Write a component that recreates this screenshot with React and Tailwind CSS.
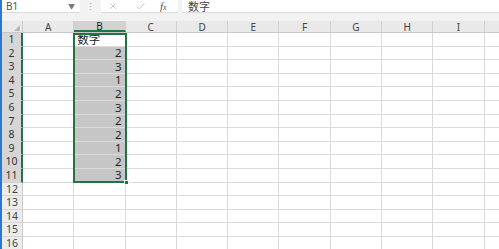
import React from "react";
import { X, Check } from "lucide-react";

const cols = ["A", "B", "C", "D", "E", "F", "G", "H", "I", ""];
const values = [2, 3, 1, 2, 3, 2, 2, 1, 2, 3];

// Spreadsheet grid with column B selected (B1:B11)
const App = () => {
  const rows = Array.from({ length: 16 }, (_, i) => i + 1);

  return (
    <div
      className="w-[499px] h-[249px] overflow-hidden flex bg-white text-[#222]"
      style={{ fontFamily: '"Noto Sans", "Noto Sans CJK SC", sans-serif' }}
    >
      {/* left blue strip */}
      <div className="w-[2px] shrink-0 bg-[#2b78d0]" />

      <div className="flex-1 flex flex-col min-w-0">
        {/* formula bar */}
        <div className="h-[21px] shrink-0 bg-[#f2f2f2] flex items-start">
          <div className="w-[78px] h-[13px] bg-white border-b border-[#dcdcdc] flex items-center justify-between pl-[4px] pr-[5px]">
            <span className="text-[10px] leading-none text-[#555]">B1</span>
            <span className="text-[7px] leading-none text-[#777]">▼</span>
          </div>
          <div className="w-[21px] h-[13px] flex items-center justify-center text-[9px] leading-none text-[#aaa]">
            ⋮
          </div>
          <div className="w-[77px] h-[13px] bg-white border-b border-[#dcdcdc] flex items-center">
            <X className="w-[10px] h-[10px] ml-[7px] text-[#a8a8a8]" strokeWidth={1.5} />
            <Check className="w-[11px] h-[11px] ml-[17px] text-[#a8a8a8]" strokeWidth={1.5} />
            <span
              className="ml-[14px] text-[11px] leading-none italic text-[#555]"
              style={{ fontFamily: '"Liberation Serif", serif' }}
            >
              f<span className="text-[8px]">x</span>
            </span>
          </div>
          <div className="ml-[4px] flex-1 h-[13px] bg-white border-b border-[#dcdcdc] flex items-center pl-[6px]">
            <span className="text-[11px] leading-none text-[#444]">数字</span>
          </div>
        </div>

        {/* grid */}
        <div className="relative flex-1">
          {/* column headers */}
          <div className="h-[12px] flex bg-[#e9e9e9] border-b border-[#c9c9c9]">
            <div className="w-[21px] shrink-0 border-r border-[#c9c9c9] relative">
              <div className="absolute right-[2px] bottom-[1px] w-0 h-0 border-l-[6px] border-l-transparent border-b-[6px] border-b-[#b9b9b9]" />
            </div>
            {cols.map((c, i) => (
              <div
                key={i}
                className={`w-[51.3px] shrink-0 flex items-center justify-center text-[10px] leading-none border-r border-[#d0d0d0] ${
                  c === "B" ? "bg-[#d2d2d2] border-b-2 border-b-[#217346] text-[#1e1e1e]" : "text-[#444]"
                }`}
              >
                {c}
              </div>
            ))}
          </div>

          {/* rows */}
          {rows.map((r) => {
            const selected = r <= 11;
            return (
              <div key={r} className="h-[13.6px] flex">
                <div
                  className={`w-[21px] shrink-0 flex items-center justify-center text-[10.5px] leading-none border-b border-[#d4d4d4] ${
                    selected
                      ? "bg-[#d6d6d6] border-r-2 border-r-[#217346] text-[#333]"
                      : "bg-[#ececec] border-r border-r-[#c9c9c9] text-[#444]"
                  }`}
                >
                  {r}
                </div>
                {cols.map((c, i) => {
                  const filled = c === "B" && r >= 2 && r <= 11;
                  return (
                    <div
                      key={i}
                      className={`w-[51.3px] shrink-0 border-r border-b border-[#dadada] flex items-center text-[11.5px] leading-none ${
                        filled ? "bg-[#c6c6c6] justify-end pr-[3px]" : "bg-white pl-[3px]"
                      }`}
                    >
                      {c === "B" && r === 1 && <span className="text-[#222]">数字</span>}
                      {filled && <span className="text-[#222]">{values[r - 2]}</span>}
                    </div>
                  );
                })}
              </div>
            );
          })}

          {/* selection outline B1:B11 */}
          <div className="absolute left-[71px] top-[12px] w-[53.5px] h-[150px] border-2 border-[#217346] pointer-events-none">
            <div className="absolute -right-[4px] -bottom-[4px] w-[5px] h-[5px] bg-[#217346] border border-white" />
          </div>
        </div>
      </div>
    </div>
  );
};

export default App;
